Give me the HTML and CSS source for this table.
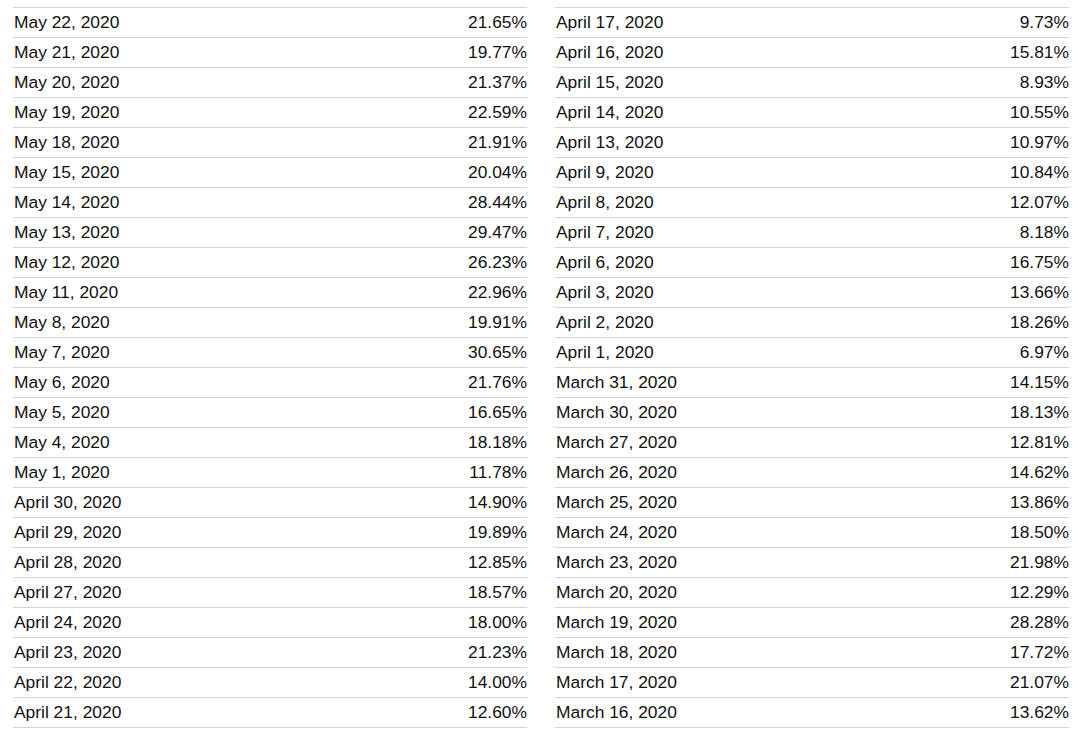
FILE: index.html
```html
<!DOCTYPE html>
<html lang="en">
<head>
<meta charset="utf-8">
<title>Daily values</title>
<link rel="stylesheet" href="styles.css">
</head>
<body>
<div class="page">
  <table class="data">
    <tbody>
      <tr><td>May 22, 2020</td><td class="num">21.65%</td></tr>
      <tr><td>May 21, 2020</td><td class="num">19.77%</td></tr>
      <tr><td>May 20, 2020</td><td class="num">21.37%</td></tr>
      <tr><td>May 19, 2020</td><td class="num">22.59%</td></tr>
      <tr><td>May 18, 2020</td><td class="num">21.91%</td></tr>
      <tr><td>May 15, 2020</td><td class="num">20.04%</td></tr>
      <tr><td>May 14, 2020</td><td class="num">28.44%</td></tr>
      <tr><td>May 13, 2020</td><td class="num">29.47%</td></tr>
      <tr><td>May 12, 2020</td><td class="num">26.23%</td></tr>
      <tr><td>May 11, 2020</td><td class="num">22.96%</td></tr>
      <tr><td>May 8, 2020</td><td class="num">19.91%</td></tr>
      <tr><td>May 7, 2020</td><td class="num">30.65%</td></tr>
      <tr><td>May 6, 2020</td><td class="num">21.76%</td></tr>
      <tr><td>May 5, 2020</td><td class="num">16.65%</td></tr>
      <tr><td>May 4, 2020</td><td class="num">18.18%</td></tr>
      <tr><td>May 1, 2020</td><td class="num">11.78%</td></tr>
      <tr><td>April 30, 2020</td><td class="num">14.90%</td></tr>
      <tr><td>April 29, 2020</td><td class="num">19.89%</td></tr>
      <tr><td>April 28, 2020</td><td class="num">12.85%</td></tr>
      <tr><td>April 27, 2020</td><td class="num">18.57%</td></tr>
      <tr><td>April 24, 2020</td><td class="num">18.00%</td></tr>
      <tr><td>April 23, 2020</td><td class="num">21.23%</td></tr>
      <tr><td>April 22, 2020</td><td class="num">14.00%</td></tr>
      <tr><td>April 21, 2020</td><td class="num">12.60%</td></tr>
    </tbody>
  </table>
  <table class="data">
    <tbody>
      <tr><td>April 17, 2020</td><td class="num">9.73%</td></tr>
      <tr><td>April 16, 2020</td><td class="num">15.81%</td></tr>
      <tr><td>April 15, 2020</td><td class="num">8.93%</td></tr>
      <tr><td>April 14, 2020</td><td class="num">10.55%</td></tr>
      <tr><td>April 13, 2020</td><td class="num">10.97%</td></tr>
      <tr><td>April 9, 2020</td><td class="num">10.84%</td></tr>
      <tr><td>April 8, 2020</td><td class="num">12.07%</td></tr>
      <tr><td>April 7, 2020</td><td class="num">8.18%</td></tr>
      <tr><td>April 6, 2020</td><td class="num">16.75%</td></tr>
      <tr><td>April 3, 2020</td><td class="num">13.66%</td></tr>
      <tr><td>April 2, 2020</td><td class="num">18.26%</td></tr>
      <tr><td>April 1, 2020</td><td class="num">6.97%</td></tr>
      <tr><td>March 31, 2020</td><td class="num">14.15%</td></tr>
      <tr><td>March 30, 2020</td><td class="num">18.13%</td></tr>
      <tr><td>March 27, 2020</td><td class="num">12.81%</td></tr>
      <tr><td>March 26, 2020</td><td class="num">14.62%</td></tr>
      <tr><td>March 25, 2020</td><td class="num">13.86%</td></tr>
      <tr><td>March 24, 2020</td><td class="num">18.50%</td></tr>
      <tr><td>March 23, 2020</td><td class="num">21.98%</td></tr>
      <tr><td>March 20, 2020</td><td class="num">12.29%</td></tr>
      <tr><td>March 19, 2020</td><td class="num">28.28%</td></tr>
      <tr><td>March 18, 2020</td><td class="num">17.72%</td></tr>
      <tr><td>March 17, 2020</td><td class="num">21.07%</td></tr>
      <tr><td>March 16, 2020</td><td class="num">13.62%</td></tr>
    </tbody>
  </table>
</div>
</body>
</html>
```

FILE: styles.css
```css
html, body {
  margin: 0;
  padding: 0;
  background: #ffffff;
}

body {
  font-family: "Liberation Sans", Arial, Helvetica, sans-serif;
  color: #111111;
}

.page {
  display: flex;
  gap: 28px;
  padding: 7px 0 0 13px;
}

.data {
  width: 514px;
  border-collapse: collapse;
  border-top: 1px solid #d2d2d2;
  font-size: 17.4px;
}

.data td {
  height: 29px;
  padding: 0 0 0 1px;
  line-height: 29px;
  border-bottom: 1px solid #d2d2d2;
  white-space: nowrap;
}

.data td.num {
  text-align: right;
  padding: 0;
}
```
